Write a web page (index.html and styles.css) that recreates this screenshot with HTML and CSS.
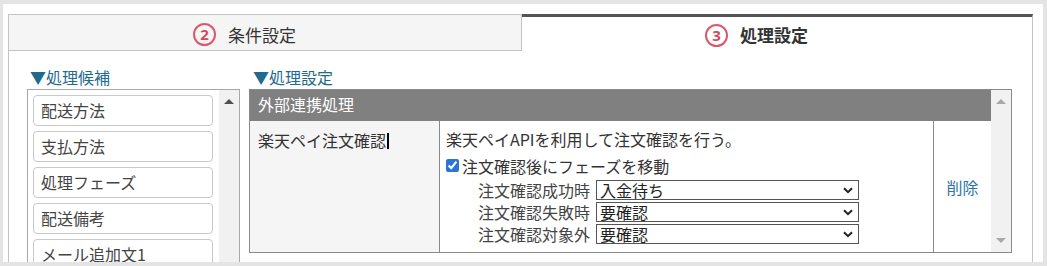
FILE: index.html
```html
<!DOCTYPE html>
<html lang="ja">
<head>
<meta charset="utf-8">
<title>処理設定</title>
<link rel="stylesheet" href="styles.css">
</head>
<body>
<div class="frame">
  <div class="tabs">
    <div class="tab tab-inactive"><span class="num">2</span><span class="tab-label">条件設定</span></div>
    <div class="tab tab-active"><span class="num">3</span><span class="tab-label">処理設定</span></div>
  </div>
  <div class="panel">
    <div class="col-left">
      <div class="section-title">▼処理候補</div>
      <div class="listbox">
        <div class="items">
          <div class="item">配送方法</div>
          <div class="item">支払方法</div>
          <div class="item">処理フェーズ</div>
          <div class="item">配送備考</div>
          <div class="item">メール追加文1</div>
        </div>
        <div class="scrollbar">
          <span class="arrow-up dark"></span>
        </div>
      </div>
    </div>
    <div class="col-right">
      <div class="section-title">▼処理設定</div>
      <div class="tablebox">
        <div class="table-content">
          <div class="table-head">外部連携処理</div>
          <div class="table-row">
            <div class="cell cell-name">楽天ペイ注文確認<span class="caret"></span></div>
            <div class="cell cell-body">
              <div class="desc">楽天ペイAPIを利用して注文確認を行う。</div>
              <label class="check-row"><input type="checkbox" checked>注文確認後にフェーズを移動</label>
              <div class="sel-row"><span class="sel-label">注文確認成功時</span><div class="select"><span>入金待ち</span><svg width="10" height="7" viewBox="0 0 10 7"><path d="M1 1.2 L5 5.2 L9 1.2" fill="none" stroke="#222" stroke-width="2"/></svg></div></div>
              <div class="sel-row"><span class="sel-label">注文確認失敗時</span><div class="select"><span>要確認</span><svg width="10" height="7" viewBox="0 0 10 7"><path d="M1 1.2 L5 5.2 L9 1.2" fill="none" stroke="#222" stroke-width="2"/></svg></div></div>
              <div class="sel-row"><span class="sel-label">注文確認対象外</span><div class="select"><span>要確認</span><svg width="10" height="7" viewBox="0 0 10 7"><path d="M1 1.2 L5 5.2 L9 1.2" fill="none" stroke="#222" stroke-width="2"/></svg></div></div>
            </div>
            <div class="cell cell-action"><span class="link">削除</span></div>
          </div>
        </div>
        <div class="scrollbar table-scroll">
          <span class="arrow-up light"></span>
          <span class="arrow-down light"></span>
        </div>
      </div>
    </div>
  </div>
</div>
</body>
</html>
```

FILE: styles.css
```css
html, body {
  margin: 0;
  padding: 0;
}
body {
  width: 1047px;
  height: 266px;
  overflow: hidden;
  background: #e4e4e4;
  font-family: "Noto Sans CJK JP", "Noto Sans", sans-serif;
  font-size: 16px;
  color: #333;
}
.frame {
  margin: 4px 4px 0 3px;
  height: 258px;
  background: #fff;
  padding: 10px 10px 0 5px;
  box-sizing: border-box;
  overflow: hidden;
}
.tabs {
  display: flex;
  height: 37px;
}
.tab {
  box-sizing: border-box;
  height: 37px;
  display: flex;
  align-items: center;
  justify-content: center;
  padding-right: 41px;
  font-size: 17px;
  color: #333;
}
.tab-inactive {
  width: 514px;
  background: #f5f5f5;
  border: 1px solid #c4c4c4;
  padding-top: 4px;
}
.tab-active {
  width: 511px;
  border-top: 3px solid #555;
  border-right: 1px solid #c4c4c4;
  padding-top: 2px;
}
.tab-active .tab-label {
  font-weight: bold;
}
.tab-label {
  line-height: 22px;
}
.num {
  box-sizing: border-box;
  width: 23px;
  height: 23px;
  border: 2px solid #d9586c;
  border-radius: 50%;
  color: #d24a5f;
  font-family: "Noto Sans", sans-serif;
  font-weight: bold;
  font-size: 15px;
  line-height: 19px;
  text-align: center;
  margin-right: 12px;
}
.panel {
  display: flex;
  gap: 9px;
  border-left: 1px solid #c4c4c4;
  border-right: 1px solid #c4c4c4;
  padding: 17px 0 0 18px;
  height: 230px;
  box-sizing: border-box;
}
.col-left {
  width: 213px;
  flex: none;
}
.col-right {
  width: 763px;
  flex: none;
}
.section-title {
  color: #1e6b8d;
  font-size: 16px;
  line-height: 18px;
  height: 18px;
  margin-bottom: 3px;
  padding-left: 3px;
}
.col-right .section-title {
  padding-left: 4px;
}
.listbox {
  border: 1px solid #a8a8a8;
  height: 190px;
  display: flex;
  box-sizing: border-box;
}
.items {
  width: 180px;
  padding: 5px 6px 0 5px;
  flex: none;
}
.item {
  box-sizing: border-box;
  height: 31px;
  border: 1px solid #c9c9c9;
  border-radius: 4px;
  padding-left: 7px;
  line-height: 29px;
  color: #444;
  margin-bottom: 5px;
  white-space: nowrap;
}
.scrollbar {
  width: 20px;
  flex: none;
  background: #f1f1f1;
  position: relative;
}
.arrow-up, .arrow-down {
  position: absolute;
  left: 5px;
  width: 0;
  height: 0;
  border-left: 5px solid transparent;
  border-right: 5px solid transparent;
}
.arrow-up {
  top: 9px;
  border-bottom: 5px solid #505050;
}
.arrow-down {
  bottom: 9px;
  border-top: 5px solid #a8a8a8;
}
.arrow-up.light {
  border-bottom-color: #a8a8a8;
}
.tablebox {
  border: 1px solid #8a8a8a;
  display: flex;
  height: 164px;
  box-sizing: border-box;
}
.table-content {
  width: 741px;
  flex: none;
}
.table-head {
  height: 31px;
  background: #808080;
  color: #fff;
  line-height: 28px;
  padding-left: 8px;
  box-sizing: border-box;
}
.table-row {
  display: flex;
  height: 131px;
}
.cell {
  box-sizing: border-box;
}
.cell-name {
  width: 189px;
  background: #f5f5f5;
  padding: 8px 0 0 8px;
  line-height: 22px;
  color: #333;
}
.caret {
  display: inline-block;
  width: 2px;
  height: 16px;
  background: #000;
  vertical-align: -2px;
  margin-left: 1px;
}
.cell-body {
  width: 494px;
  border-left: 1px solid #8a8a8a;
  padding: 6px 0 0 6px;
}
.desc {
  line-height: 24px;
  height: 24px;
}
.check-row {
  display: flex;
  align-items: center;
  height: 29px;
  color: #333;
}
.check-row input {
  margin: 0 3px 0 0;
  width: 13px;
  height: 13px;
  accent-color: #2a74d6;
}
.sel-row {
  display: flex;
  align-items: center;
  height: 20px;
  margin-bottom: 2px;
  padding-left: 32px;
}
.sel-label {
  width: 112px;
  margin-right: 6px;
  color: #444;
  white-space: nowrap;
  line-height: 20px;
}
.select {
  box-sizing: border-box;
  width: 263px;
  height: 20px;
  border: 1px solid #555;
  display: flex;
  align-items: center;
  justify-content: space-between;
  padding: 0 5px 0 3px;
  line-height: 18px;
  color: #222;
}
.cell-action {
  width: 58px;
  border-left: 1px solid #8a8a8a;
  display: flex;
  align-items: center;
  justify-content: center;
}
.link {
  color: #2f74a5;
}
.table-scroll {
  width: 20px;
}
```
